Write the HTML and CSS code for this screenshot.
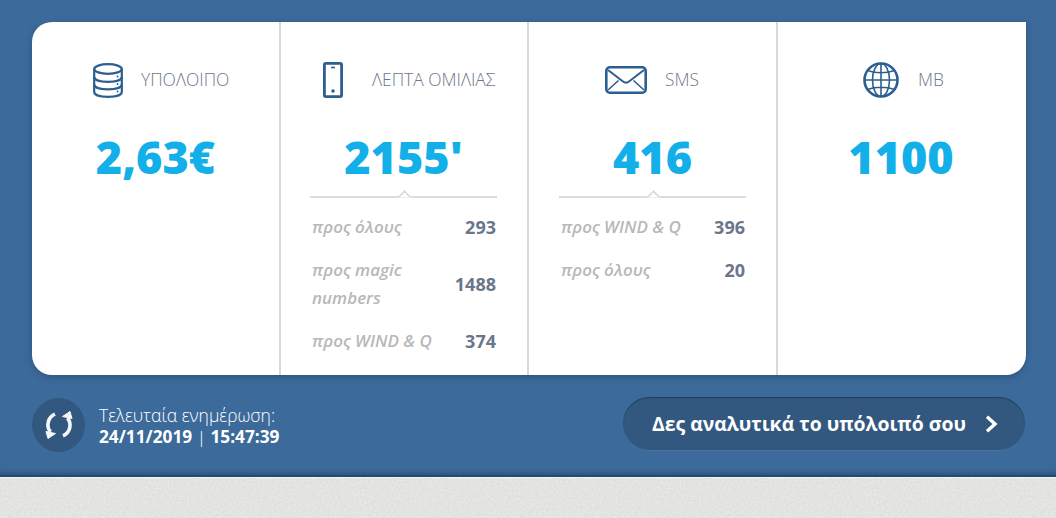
FILE: index.html
```html
<!DOCTYPE html>
<html lang="el">
<head>
<meta charset="utf-8">
<title>Υπόλοιπο</title>
<link rel="stylesheet" href="styles.css">
</head>
<body>
<section class="panel">
  <div class="card">
    <div class="col">
      <div class="head">
        <svg class="ico ico-db" viewBox="0 0 30 35" fill="none" stroke="#2c5f8f" stroke-width="2.200"><ellipse cx="15" cy="6" rx="13.800" ry="4.800"/><path d="M1.200 6v23c0 3 6 4.800 13.800 4.800S28.800 32 28.800 29V6"/><path d="M1.200 14c0 3 6 4.800 13.800 4.800s13.800-1.800 13.800-4.800M1.200 21.500c0 3 6 4.800 13.800 4.800s13.800-1.800 13.800-4.800"/><path d="M24.500 13.500h.1M24.500 21h.1M24.500 28.500h.1" stroke-width="1.800" stroke-linecap="round"/></svg>
        <span class="label">ΥΠΟΛΟΙΠΟ</span>
      </div>
      <div class="value">2,63€</div>
    </div>
    <div class="col">
      <div class="head">
        <svg class="ico ico-phone" viewBox="0 0 20 36" fill="none" stroke="#2c5f8f" stroke-width="2.800"><rect x="1.400" y="1.400" width="17.200" height="33.200" rx="1.500"/><path d="M8 5.500h4" stroke-width="1.600"/><circle cx="10" cy="29" r="1.800" fill="#2c5f8f" stroke="none"/></svg>
        <span class="label">ΛΕΠΤΑ ΟΜΙΛΙΑΣ</span>
      </div>
      <div class="value">2155'</div>
      <div class="rule"></div>
      <div class="row"><span class="name">προς όλους</span><span class="num">293</span></div>
      <div class="row"><span class="name">προς magic numbers</span><span class="num">1488</span></div>
      <div class="row"><span class="name">προς WIND &amp; Q</span><span class="num">374</span></div>
    </div>
    <div class="col">
      <div class="head">
        <svg class="ico ico-mail" viewBox="0 0 42 28" fill="none" stroke="#2c5f8f" stroke-width="2.600"><rect x="1.300" y="1.300" width="39.400" height="25.400" rx="3.500"/><path d="M3 4l15 11.500c2 1.500 4 1.500 6 0L39 4" stroke-width="2"/><path d="M3 24l10.500-9.500M39 24L28.500 14.500" stroke-width="1.600"/></svg>
        <span class="label">SMS</span>
      </div>
      <div class="value">416</div>
      <div class="rule"></div>
      <div class="row"><span class="name">προς WIND &amp; Q</span><span class="num">396</span></div>
      <div class="row"><span class="name">προς όλους</span><span class="num">20</span></div>
    </div>
    <div class="col">
      <div class="head">
        <svg class="ico ico-globe" viewBox="0 0 36 36" fill="none" stroke="#2c5f8f" stroke-width="1.600"><circle cx="18" cy="18" r="16.500" stroke-width="2.600"/><ellipse cx="18" cy="18" rx="8.500" ry="16.500"/><path d="M18 1.500v33M1.500 18h33M4.500 8.500c8 3 19 3 27 0M4.500 27.500c8-3 19-3 27 0"/></svg>
        <span class="label">MB</span>
      </div>
      <div class="value">1100</div>
    </div>
  </div>
  <div class="bar">
    <div class="update">
      <span class="refresh">
        <svg class="refresh-ico" viewBox="0 0 30 28" fill="none" stroke="#f4f7fa" stroke-width="3.600"><path d="M11 3.200A11.500 11.500 0 0 0 6.500 21"/><path d="M2 20.500L11.500 22.500L4 27.500Z" fill="#f4f7fa" stroke-width="1"/><path d="M19 24.800A11.500 11.500 0 0 0 23.500 7"/><path d="M28 7.500L18.500 5.500L26 .5Z" fill="#f4f7fa" stroke-width="1"/></svg>
      </span>
      <div class="stamp">
        <div class="stamp-title">Τελευταία ενημέρωση:</div>
        <div class="stamp-date">24/11/2019 <span class="sep">|</span> 15:47:39</div>
      </div>
    </div>
    <a class="more" href="#">Δες αναλυτικά το υπόλοιπό σου
      <svg class="chev" viewBox="0 0 13 18" fill="none" stroke="#fff" stroke-width="3.400"><path d="M2 1.800L10 9l-8 7.200"/></svg>
    </a>
  </div>
</section>
<footer class="ground">
  <svg class="grain" width="100%" height="100%"><filter id="grain"><feTurbulence type="fractalNoise" baseFrequency="0.5" numOctaves="2" seed="3"/><feColorMatrix values="0 0 0 0 0.5  0 0 0 0 0.5  0 0 0 0 0.5  0.45 0 0 0 -0.12"/></filter><rect width="100%" height="100%" filter="url(#grain)"/></svg>
</footer>
</body>
</html>
```
FILE: styles.css
```css
* { box-sizing: border-box; }
html, body { margin: 0; padding: 0; }
body {
  width: 1056px;
  height: 518px;
  overflow: hidden;
  font-family: "Open Sans", "Noto Sans", sans-serif;
  background: #e8e8e7;
}
.panel {
  height: 477px;
  padding: 22px 30px 0 32px;
  background: #3c6a9a;
  border-bottom: 2px solid #254a70;
  box-shadow: inset 0 -6px 5px -4px rgba(30, 60, 95, .55);
}
.card {
  display: grid;
  grid-template-columns: 247px 248px 249px 250px;
  height: 353px;
  background: #fff;
  border-radius: 20px 0 20px 20px;
  box-shadow: 0 2px 6px rgba(20, 50, 80, .35);
}
.col {
  padding: 0 30px 0 29px;
  border-left: 2px solid #d8d8d8;
}
.col:first-child { border-left-color: transparent; padding-left: 28px; }
.col:nth-child(3) { padding-left: 30px; }
.col:last-child { padding-right: 31px; }
.head {
  height: 100px;
  padding-top: 14px;
  display: flex;
  align-items: center;
}
.ico { display: block; flex: none; }
.ico-db { width: 30px; height: 35px; margin: 2px 18px 0 31px; }
.ico-phone { width: 20px; height: 36px; margin: 2px 29px 0 13px; }
.ico-mail { width: 42px; height: 28px; margin: 2px 18px 0 46px; }
.ico-globe { width: 36px; height: 36px; margin: 2px 19px 0 56px; }
.label {
  font-size: 17.400px;
  font-weight: 300;
  color: #6d7789;
  white-space: nowrap;
}
.value {
  height: 64px;
  margin-top: 3px;
  font-size: 45px;
  line-height: 64px;
  font-weight: 800;
  color: #12afe9;
  text-align: center;
}
.rule {
  position: relative;
  height: 2px;
  margin-top: 7px;
  margin-bottom: 7.500px;
  background: #dcdcdc;
}
.rule::after {
  content: "";
  position: absolute;
  left: 50%;
  top: -4px;
  width: 9px;
  height: 9px;
  margin-left: -4.500px;
  background: #fff;
  border-top: 2px solid #dcdcdc;
  border-left: 2px solid #dcdcdc;
  transform: rotate(45deg);
  clip-path: polygon(0 0, 100% 0, 0 100%);
}
.row {
  display: flex;
  align-items: center;
  justify-content: space-between;
  padding: 7.500px 1px 7.500px 2px;
  line-height: 28px;
}
.name {
  max-width: 125px;
  font-size: 17px;
  font-weight: 600;
  font-style: italic;
  color: #b8b8b8;
}
.num {
  font-size: 18px;
  font-weight: 700;
  color: #6b768b;
}
.bar {
  display: flex;
  align-items: flex-start;
  justify-content: space-between;
  margin-top: 22px;
  padding-right: 1px;
}
.update { display: flex; align-items: center; margin-top: 1px; }
.refresh {
  display: flex;
  align-items: center;
  justify-content: center;
  width: 53px;
  height: 54px;
  margin-right: 14px;
  border-radius: 50%;
  background: #33587f;
}
.refresh-ico { display: block; width: 30px; height: 28px; }
.stamp { margin-top: 2px; color: #fff; line-height: 21px; }
.stamp-title { font-size: 17.500px; font-weight: 300; }
.stamp-date { font-size: 17.250px; font-weight: 700; }
.sep { font-weight: 300; }
.more {
  display: flex;
  align-items: center;
  justify-content: space-between;
  width: 402px;
  height: 53px;
  padding: 0 27px 0 29px;
  border-radius: 27px;
  background: #33587f;
  box-shadow: inset 0 1px 1px rgba(20, 45, 75, .6), 0 1px 0 rgba(255, 255, 255, .06);
  color: #fff;
  font-size: 19.400px;
  font-weight: 700;
  text-decoration: none;
}
.chev { display: block; width: 13px; height: 18px; flex: none; }
.ground {
  height: 41px;
  overflow: hidden;
  border-top: 1px solid #f4f4f4;
}
.grain { display: block; }
```
